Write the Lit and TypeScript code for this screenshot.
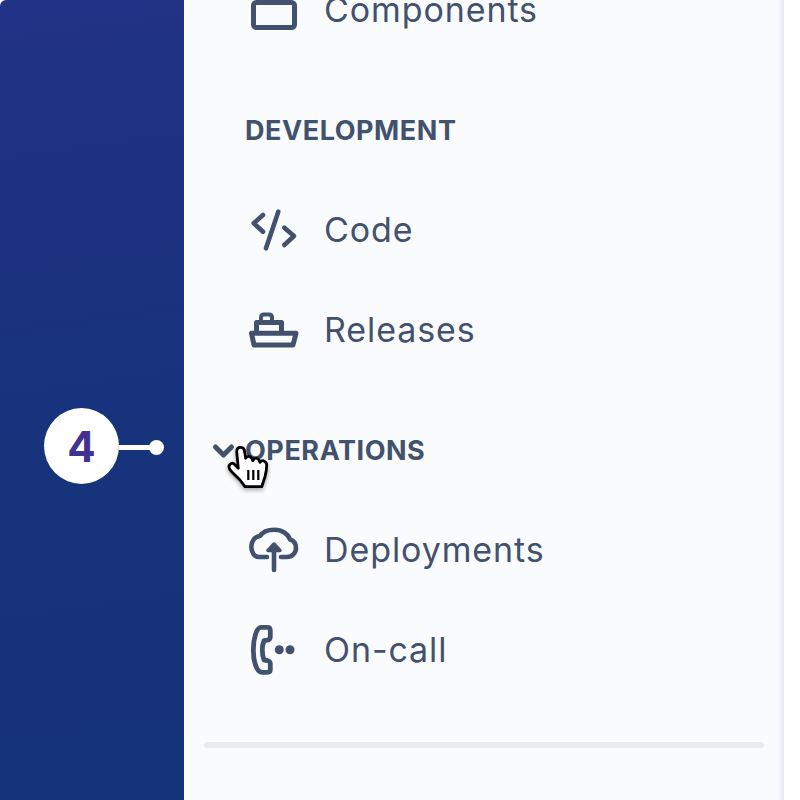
import { LitElement, html, css, svg } from "lit";
import { customElement } from "lit/decorators.js";

const icons: Record<string, unknown> = {
  components: svg`<rect x="5.500" y="17.500" width="41" height="25" rx="3" fill="none" stroke="currentColor" stroke-width="5"/>`,
  code: svg`<g fill="none" stroke="currentColor" stroke-width="4.600" stroke-linecap="round" stroke-linejoin="round"><path d="M15 10 5.700 18.300 15 26.700"/><path d="M36.300 22.700 46 31 36.300 40"/><path d="M30.300 6.700 18 43.300"/></g>`,
  releases: svg`<g fill="none" stroke="currentColor" stroke-linejoin="round" stroke-linecap="round"><path d="M3.500 28.300H48L45 40H6Z" stroke-width="5"/><path d="M8.500 27V17.500H33.500V27" stroke-width="5"/><path d="M13 16V12.500Q13 9.500 16 9.500H21Q24 9.500 24 12.500V16" stroke-width="4"/></g>`,
  deploy: svg`<g fill="none" stroke="currentColor" stroke-width="4.600" stroke-linecap="round" stroke-linejoin="round"><path d="M19 32H11C6.500 32 3.300 27.500 3.300 21.700C3.300 16 7 11.500 12 11C14.500 7 20 4.700 26.500 4.700C34 4.700 40 9 42 14.500C46 15.500 48 19 48 23.300C48 28 44 32 39 32H33"/><path d="M26 45V24"/><path d="M20 25.500 26 19 32 25.500Z" fill="currentColor" stroke-width="3.500"/></g>`,
  oncall: svg`<path d="M13 2.300H19.500C21.500 2.300 22.300 3.500 22.300 5.500V11.500C22.300 13.500 21 14.800 19.500 15.200L16 15.700C14.800 18.500 14.300 21.500 14.300 25C14.300 28.500 14.800 31.700 16 35L19.500 35.500C21 35.800 22.300 36.800 22.300 38.800V44.500C22.300 46.500 21.500 47.300 19.500 47.300H14C8.500 47.300 5.300 36 5.300 25C5.300 14 8.500 2.300 13 2.300Z" fill="none" stroke="currentColor" stroke-width="4.800" stroke-linejoin="round"/><circle cx="31.300" cy="24.700" r="4.500" fill="currentColor"/><circle cx="42" cy="24.700" r="4.500" fill="currentColor"/>`,
};

@customElement("app-root")
export class AppRoot extends LitElement {
  static styles = css`
    :host { display: block; height: 800px; width: 800px; overflow: hidden; position: relative; background: #fff;
      font-family: Inter, "Noto Sans", sans-serif; color: #42526e; }
    .shell { display: flex; height: 800px; width: 784px; }
    .rail { width: 184px; flex: none; border-top-left-radius: 6px; background: linear-gradient(172deg, #223286 0%, #1c3280 30%, #17337c 55%, #14327a 100%); }
    .panel { flex: 1; background: #fafbfd; box-shadow: inset -6px 0 5px -4px rgba(9, 30, 66, 0.1); display: flex; flex-direction: column;
      margin-top: -40px; height: 840px; padding: 0 20px; box-sizing: border-box; }
    .item { height: 100px; flex: none; display: flex; align-items: center; gap: 26px; padding-left: 44px; font-size: 34px; line-height: 40px; letter-spacing: 0.9px; }
    .icon { width: 50px; height: 50px; flex: none; overflow: visible; }
    .heading { height: 120px; flex: none; box-sizing: border-box; padding: 22px 0 0 41px; display: flex; align-items: center;
      font-size: 27px; font-weight: 700; line-height: 20px; letter-spacing: 0.55px; position: relative; }
    .chevron { position: absolute; left: 9px; top: 63.5px; width: 21px; height: 16px; overflow: visible; }
    .divider { height: 6px; margin-top: 42px; border-radius: 3px; background: #e8eaed; flex: none; }
    .badge { position: absolute; left: 44px; top: 408px; display: flex; align-items: center; }
    .num { width: 75px; height: 76px; border-radius: 50%; background: #fff; color: #403294; display: flex; align-items: center; justify-content: center;
      font-size: 42px; font-weight: 700; line-height: 1; padding-top: 2px; box-sizing: border-box; }
    .line { width: 34px; height: 5px; background: #fff; margin-top: 3px; }
    .dot { width: 15px; height: 15px; border-radius: 50%; background: #fff; margin: 3px 0 0 -4px; }
    .cursor { position: absolute; left: 226px; top: 444px; width: 44px; height: 48px; overflow: visible; filter: drop-shadow(0 2px 2px rgba(0,0,0,.35)); }
  `;
  private item(icon: string, label: string) {
    return html`<div class="item"><svg class="icon" viewBox="0 0 50 50">${icons[icon]}</svg><span>${label}</span></div>`;
  }
  render() {
    return html`<div class="shell">
        <div class="rail"></div>
        <div class="panel">
          ${this.item("components", "Components")}
          <div class="heading"><span>DEVELOPMENT</span></div>
          ${this.item("code", "Code")}
          ${this.item("releases", "Releases")}
          <div class="heading">
            <svg class="chevron" viewBox="0 0 21 16"><path d="M2.500 3 10.500 11 18.500 3" fill="none" stroke="#42526e" stroke-width="5" stroke-linecap="round" stroke-linejoin="round"/></svg>
            <span>OPERATIONS</span>
          </div>
          ${this.item("deploy", "Deployments")}
          ${this.item("oncall", "On-call")}
          <div class="divider"></div>
        </div>
      </div>
      <div class="badge"><div class="num">4</div><div class="line"></div><div class="dot"></div></div>
      <svg class="cursor" viewBox="0 0 44 48">
        <path d="M3 22C4 20 6 19 7.300 19.300L12.300 24.300L10.700 7.700C10.800 4.500 12.500 3.300 14 3.300C16.500 3.300 18 4 18.300 6L19.700 14.300C21 12.500 23 12 24 12.700C25.500 13.500 26.500 15 26.700 16.700C28 14.500 29.500 14 30.700 14.300C32.500 15 33.500 16.500 34 18.300C35 16.700 36.500 16.500 37.300 16.700C39.500 17.500 40.700 19 40.700 21C40.700 26 40 29 39 32.700L35.700 42.700H19L14 36L5.700 27.700C4 26 2.500 24 3 22Z" fill="#fff" stroke="#000" stroke-width="2.800" stroke-linejoin="round"/>
        <path d="M22.300 26V36M27.300 26V36M32.300 26V36" stroke="#000" stroke-width="2.200" fill="none"/>
      </svg>`;
  }
}
